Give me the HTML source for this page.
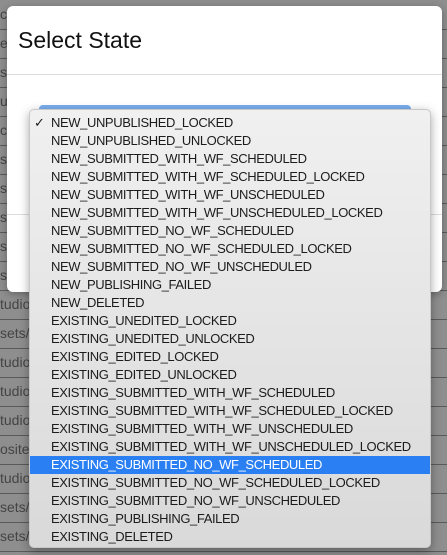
<!DOCTYPE html>
<html><head><style>
body{margin:0;width:447px;height:555px;overflow:hidden;background:#8e8e8e;font-family:"Liberation Sans",sans-serif;position:relative}
.row{position:absolute;left:0;width:447px;height:29px;border-bottom:1px solid #5a5a5a;color:#444;font-size:14px;line-height:29px;padding-left:0}
.modal{position:absolute;left:7px;top:6px;width:435px;height:286px;background:#fff;border-radius:6px;box-shadow:0 2px 8px rgba(0,0,0,.3)}
.modal h1{margin:0;position:absolute;left:11px;top:21px;font-size:23px;font-weight:normal;color:#111}
.hr1{position:absolute;left:0;right:0;top:68px;height:1px;background:#ddd}
.hr2{position:absolute;left:0;right:0;top:208px;height:1px;background:#ddd}
.sel{position:absolute;left:32px;top:99px;width:372px;height:8px;border-radius:4px 4px 0 0;background:#7aaef0}
.dd{position:absolute;left:29px;top:109px;width:402px;height:439px;border-radius:5px;background:linear-gradient(#f0f0f0,#d9d9d9);box-shadow:0 3px 10px rgba(0,0,0,.35);border:1px solid #c8c8c8;box-sizing:border-box}
.it{position:absolute;left:0;width:400px;height:18px;line-height:18px;font-size:13px;color:#1c1c1c;padding-left:21px;box-sizing:border-box;letter-spacing:-0.4px}
.hl{background:#2a7ff2;color:#fff}
.ck{position:absolute;left:4px}
</style></head><body>
<div class="row" style="top:0">cu</div>
<div class="row" style="top:29px">es</div>
<div class="row" style="top:58px">s</div>
<div class="row" style="top:87px">up</div>
<div class="row" style="top:116px">cu</div>
<div class="row" style="top:145px">s</div>
<div class="row" style="top:174px">s</div>
<div class="row" style="top:203px">s</div>
<div class="row" style="top:232px">s</div>
<div class="row" style="top:261px">s</div>
<div class="row" style="top:290px">tudio</div>
<div class="row" style="top:319px">sets/</div>
<div class="row" style="top:348px">tudio</div>
<div class="row" style="top:377px">tudio</div>
<div class="row" style="top:406px">tudio</div>
<div class="row" style="top:435px">osite/</div>
<div class="row" style="top:464px">tudio</div>
<div class="row" style="top:493px">sets/</div>
<div class="row" style="top:522px">sets/</div>
<div class="modal"><h1>Select State</h1><div class="hr1"></div><div class="hr2"></div><div class="sel"></div></div>
<div class="dd">
<div class="it" style="top:4px"><span class="ck">✓</span>NEW_UNPUBLISHED_LOCKED</div>
<div class="it" style="top:22px">NEW_UNPUBLISHED_UNLOCKED</div>
<div class="it" style="top:40px">NEW_SUBMITTED_WITH_WF_SCHEDULED</div>
<div class="it" style="top:58px">NEW_SUBMITTED_WITH_WF_SCHEDULED_LOCKED</div>
<div class="it" style="top:76px">NEW_SUBMITTED_WITH_WF_UNSCHEDULED</div>
<div class="it" style="top:94px">NEW_SUBMITTED_WITH_WF_UNSCHEDULED_LOCKED</div>
<div class="it" style="top:112px">NEW_SUBMITTED_NO_WF_SCHEDULED</div>
<div class="it" style="top:130px">NEW_SUBMITTED_NO_WF_SCHEDULED_LOCKED</div>
<div class="it" style="top:148px">NEW_SUBMITTED_NO_WF_UNSCHEDULED</div>
<div class="it" style="top:166px">NEW_PUBLISHING_FAILED</div>
<div class="it" style="top:184px">NEW_DELETED</div>
<div class="it" style="top:202px">EXISTING_UNEDITED_LOCKED</div>
<div class="it" style="top:220px">EXISTING_UNEDITED_UNLOCKED</div>
<div class="it" style="top:238px">EXISTING_EDITED_LOCKED</div>
<div class="it" style="top:256px">EXISTING_EDITED_UNLOCKED</div>
<div class="it" style="top:274px">EXISTING_SUBMITTED_WITH_WF_SCHEDULED</div>
<div class="it" style="top:292px">EXISTING_SUBMITTED_WITH_WF_SCHEDULED_LOCKED</div>
<div class="it" style="top:310px">EXISTING_SUBMITTED_WITH_WF_UNSCHEDULED</div>
<div class="it" style="top:328px">EXISTING_SUBMITTED_WITH_WF_UNSCHEDULED_LOCKED</div>
<div class="it hl" style="top:346px">EXISTING_SUBMITTED_NO_WF_SCHEDULED</div>
<div class="it" style="top:364px">EXISTING_SUBMITTED_NO_WF_SCHEDULED_LOCKED</div>
<div class="it" style="top:382px">EXISTING_SUBMITTED_NO_WF_UNSCHEDULED</div>
<div class="it" style="top:400px">EXISTING_PUBLISHING_FAILED</div>
<div class="it" style="top:418px">EXISTING_DELETED</div>
</div>
</body></html>
